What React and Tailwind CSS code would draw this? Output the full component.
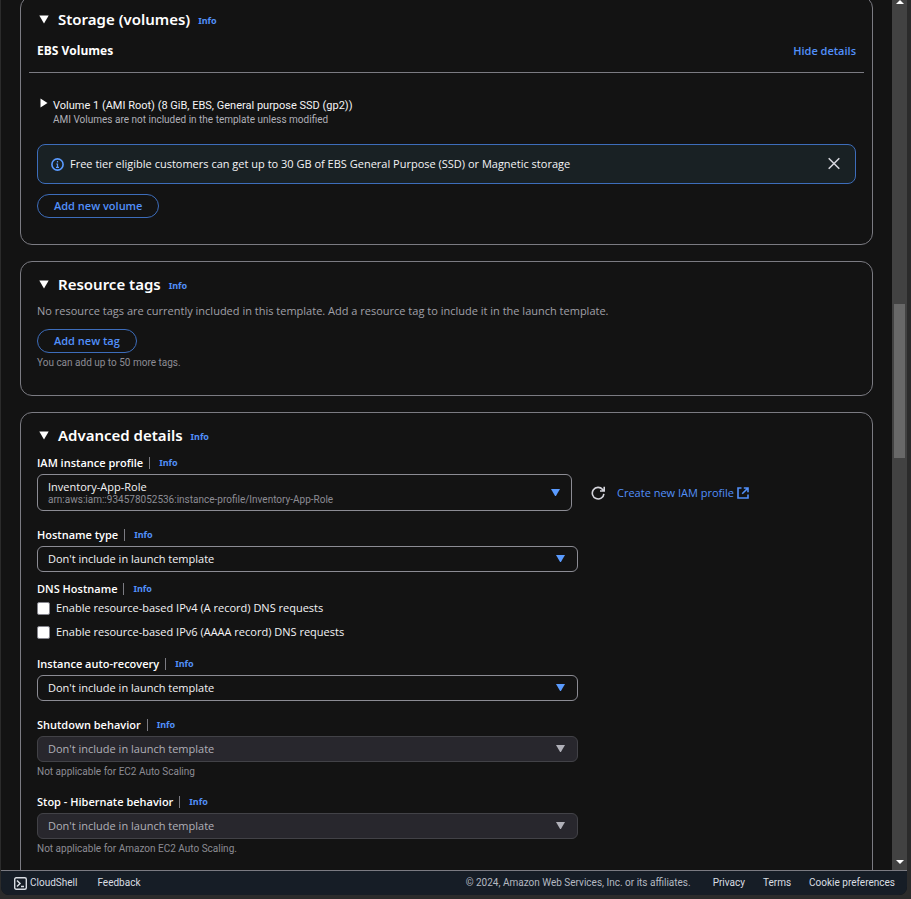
function Caret({ className = "" }) {
  return (
    <svg viewBox="0 0 10 9" className={`h-[9px] w-[10px] fill-current ${className}`} aria-hidden="true">
      <path d="M0.3 0.5h9.4L5 8.5z" />
    </svg>
  );
}

function SelectCaret({ className = "" }) {
  return (
    <svg viewBox="0 0 9 7" className={`h-[7px] w-[9px] shrink-0 fill-current ${className}`} aria-hidden="true">
      <path d="M0 0h9L4.9 7h-0.8z" />
    </svg>
  );
}

function InfoLink({ className = "" }) {
  return (
    <a href="#info" className={`font-['Noto_Sans',sans-serif] text-[9px] leading-3 font-bold text-[#5290fa] ${className}`}>
      Info
    </a>
  );
}

function Card({ title, children }) {
  return (
    <section className="rounded-xl border border-[#7b7b82] px-4 pt-[10px]">
      <header className="flex h-6 items-center">
        <button type="button" aria-label={`Toggle ${title}`} className="flex w-[21px] pl-[2px] text-white">
          <Caret />
        </button>
        <h2 className="font-['Noto_Sans',sans-serif] text-[15px] leading-[22px] font-semibold text-white">{title}</h2>
        <InfoLink className="mt-1 ml-2" />
      </header>
      {children}
    </section>
  );
}

function Label({ children, htmlFor }) {
  const Text = htmlFor ? "label" : "span";
  return (
    <div className="flex h-4 items-center">
      <Text htmlFor={htmlFor} className="text-[11px] leading-4 font-semibold text-white">
        {children}
      </Text>
      <span className="mr-[9px] ml-[6px] h-3 w-px bg-[#7b7b82]" />
      <InfoLink />
    </div>
  );
}

function SelectField({ id, label, help, disabled }) {
  return (
    <div className="w-full max-w-[541px]">
      <Label htmlFor={id}>{label}</Label>
      <div className="relative mt-[3px]">
        <select
          id={id}
          disabled={disabled}
          className="block h-[26px] w-full appearance-none rounded-md border border-[#8c8c94] bg-[#131313] px-[10px] text-[11px] leading-4 text-[#f4f4f6] opacity-100 disabled:border-[#424247] disabled:bg-[#28272d] disabled:text-[#b0b0b8]"
        >
          <option>Don't include in launch template</option>
        </select>
        <SelectCaret
          className={`pointer-events-none absolute top-[9px] right-[13px] ${disabled ? "text-[#b0b0b8]" : "text-[#5a9bff]"}`}
        />
      </div>
      {help && (
        <p className="mt-[3px] font-[Roboto,sans-serif] text-[10px] leading-[13px] text-[#8c8c94]">{help}</p>
      )}
    </div>
  );
}

function CheckRow({ children }) {
  return (
    <label className="flex h-[22px] items-center gap-[6px] text-[11px] leading-4 text-[#f4f4f6]">
      <input
        type="checkbox"
        className="h-[13px] w-[13px] appearance-none rounded-[2px] border border-[#85858d] bg-white checked:bg-[#539fff]"
      />
      {children}
    </label>
  );
}

function PillButton({ children }) {
  return (
    <button
      type="button"
      className="block h-6 rounded-full border border-[#3d6dbb] px-4 text-[11px] leading-4 font-semibold text-[#5290fa]"
    >
      {children}
    </button>
  );
}

function Storage() {
  return (
    <Card title="Storage (volumes)">
      <div className="mt-3 flex items-center justify-between text-[11px] leading-4">
        <h3 className="text-xs leading-4 font-bold text-white">EBS Volumes</h3>
        <a href="#details" className="font-semibold text-[#5290fa]">
          Hide details
        </a>
      </div>
      <hr className="-mx-2 mt-[13px] border-[#7b7b82]" />
      <div className="mt-[25px] flex items-start">
        <button type="button" aria-label="Expand volume 1" className="flex w-4 pl-[3px] text-white">
          <svg viewBox="0 0 8 10" className="h-[10px] w-2 fill-current" aria-hidden="true">
            <path d="M0.5 0.5v9L7.5 5z" />
          </svg>
        </button>
        <div>
          <p className="font-[Roboto,sans-serif] text-[11px] leading-4 text-[#f4f4f6]">
            Volume 1 (AMI Root) (8 GiB, EBS, General purpose SSD (gp2))
          </p>
          <p className="font-[Roboto,sans-serif] text-[10px] leading-3 text-[#b0b0b8]">
            AMI Volumes are not included in the template unless modified
          </p>
        </div>
      </div>
      <div className="mt-[18px] flex h-10 items-center rounded-lg border border-[#3d6dbb] bg-[#192124] px-[13px]">
        <svg viewBox="0 0 13 13" className="h-[13px] w-[13px] fill-none stroke-[#5a9bff]" aria-hidden="true">
          <circle cx="6.5" cy="6.5" r="5.6" strokeWidth="1.6" />
          <path d="M6.5 3v1.5M5.3 6h1.2v3.3M5 9.4h3" strokeWidth="1.2" />
        </svg>
        <p className="ml-[6px] flex-1 text-[11px] leading-4 text-[#f4f4f6]">
          Free tier eligible customers can get up to 30 GB of EBS General Purpose (SSD) or Magnetic storage
        </p>
        <button type="button" aria-label="Dismiss" className="text-[#d5d5dc]">
          <svg viewBox="0 0 15 14" className="h-[14px] w-[15px] fill-none stroke-current" aria-hidden="true">
            <path d="M1.7 1.2l10.6 10.6M12.3 1.2L1.7 11.8" strokeWidth="1.6" />
          </svg>
        </button>
      </div>
      <div className="mt-[10px] pb-[26px]">
        <PillButton>Add new volume</PillButton>
      </div>
    </Card>
  );
}

function ResourceTags() {
  return (
    <Card title="Resource tags">
      <p className="mt-[7px] text-[11px] leading-4 text-[#a0a0a8]">
        No resource tags are currently included in this template. Add a resource tag to include it in the launch
        template.
      </p>
      <div className="mt-[10px] pb-[26px]">
        <PillButton>Add new tag</PillButton>
        <p className="mt-1 font-[Roboto,sans-serif] text-[10px] leading-3 text-[#8c8c94]">
          You can add up to 50 more tags.
        </p>
      </div>
    </Card>
  );
}

function AdvancedDetails() {
  return (
    <Card title="Advanced details">
      <div className="mt-2">
        <Label htmlFor="iam-profile">IAM instance profile</Label>
        <div className="mt-[3px] flex items-center">
          <button
            id="iam-profile"
            type="button"
            aria-haspopup="listbox"
            className="flex h-[37px] w-full max-w-[535px] items-center justify-between rounded-md border border-[#8c8c94] pr-[11px] pl-[10px] text-left"
          >
            <span>
              <span className="block text-[11px] leading-[14px] text-[#f4f4f6]">Inventory-App-Role</span>
              <span className="block font-[Roboto,sans-serif] text-[10px] leading-3 text-[#8c8c94]">
                arn:aws:iam::934578052536:instance-profile/Inventory-App-Role
              </span>
            </span>
            <SelectCaret className="text-[#5a9bff]" />
          </button>
          <button type="button" aria-label="Refresh profiles" className="ml-[19px] text-[#d5d5dc]">
            <svg viewBox="0 0 14 14" className="h-[14px] w-[14px] fill-none stroke-current" aria-hidden="true">
              <path d="M12.9 7.8A5.8 5.8 0 1 1 11.6 3.5L12.8 4.6M13.2 0.8V5H9" strokeWidth="1.6" />
            </svg>
          </button>
          <a
            href="#create-profile"
            className="ml-3 flex items-center gap-[3px] text-[11px] leading-4 whitespace-nowrap text-[#5290fa]"
          >
            Create new IAM profile
            <svg viewBox="0 0 12 12" className="h-3 w-3 fill-none stroke-current" aria-hidden="true">
              <path d="M4.5 1H1v10h10V7.5M6.8 1H11v4.2M11 1L5.2 6.8" strokeWidth="1.6" />
            </svg>
          </a>
        </div>
      </div>
      <div className="mt-4">
        <SelectField id="hostname-type" label="Hostname type" />
      </div>
      <div role="group" aria-label="DNS Hostname" className="mt-[9px]">
        <Label>DNS Hostname</Label>
        <div className="flex flex-col gap-[2px]">
          <CheckRow>Enable resource-based IPv4 (A record) DNS requests</CheckRow>
          <CheckRow>Enable resource-based IPv6 (AAAA record) DNS requests</CheckRow>
        </div>
      </div>
      <div className="mt-[13px] flex flex-col gap-4 pb-10">
        <SelectField id="auto-recovery" label="Instance auto-recovery" />
        <SelectField id="shutdown" label="Shutdown behavior" help="Not applicable for EC2 Auto Scaling" disabled />
        <SelectField
          id="hibernate"
          label="Stop - Hibernate behavior"
          help="Not applicable for Amazon EC2 Auto Scaling."
          disabled
        />
      </div>
    </Card>
  );
}

function ScrollRail() {
  return (
    <div className="flex w-[15px] shrink-0 flex-col items-center justify-between bg-[#424242]" aria-hidden="true">
      <svg viewBox="0 0 8 4" className="h-1 w-2 fill-white">
        <path d="M4 0l4 4H0z" />
      </svg>
      <div className="flex w-full flex-1 flex-col items-center">
        <div className="basis-[35%]" />
        <div className="w-[11px] basis-[18%] bg-[#686868]" />
      </div>
      <svg viewBox="0 0 8 4" className="mb-[6px] h-1 w-2 fill-white">
        <path d="M0 0h8L4 4z" />
      </svg>
    </div>
  );
}

function Footer() {
  return (
    <footer className="flex h-[25px] shrink-0 items-center border-t border-[#7b7b82] bg-[#161d26] pr-3 pl-[13px] font-[Roboto,sans-serif] text-[10px] leading-3 text-[#d9dde3]">
      <button type="button" className="flex items-center gap-[3px]">
        <svg viewBox="0 0 13 13" className="h-[13px] w-[13px] fill-none stroke-current" aria-hidden="true">
          <rect x="0.7" y="0.7" width="11.6" height="11.6" rx="1.5" strokeWidth="1.4" />
          <path d="M3 3.5L6 6.5L3 9.5M7 9.5h3" strokeWidth="1.5" />
        </svg>
        CloudShell
      </button>
      <button type="button" className="ml-5">
        Feedback
      </button>
      <span className="ml-auto text-[#b4b9c1]">© 2024, Amazon Web Services, Inc. or its affiliates.</span>
      <nav className="ml-[22px] flex gap-[18px]">
        <a href="#privacy">Privacy</a>
        <a href="#terms">Terms</a>
        <a href="#cookies">Cookie preferences</a>
      </nav>
    </footer>
  );
}

export default function App() {
  return (
    <div className="h-screen bg-[#2b2b2b] pr-1 pb-1 pl-px font-['Open_Sans',sans-serif]">
      <div className="flex h-full flex-col overflow-hidden rounded-b-lg bg-[#131313]">
        <div className="flex min-h-0 flex-1">
          <main className="flex-1 overflow-hidden">
            <div className="-mt-1 flex flex-col gap-4 px-[19px]">
              <Storage />
              <ResourceTags />
              <AdvancedDetails />
            </div>
          </main>
          <ScrollRail />
        </div>
        <Footer />
      </div>
    </div>
  );
}
